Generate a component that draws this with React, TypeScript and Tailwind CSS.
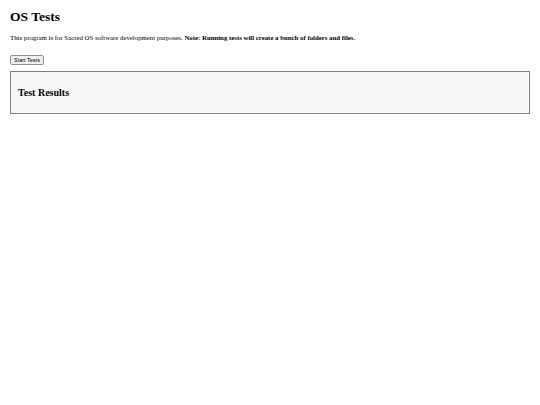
export default function App() {
  return (
    <div className="min-h-screen bg-white px-[10px] pt-[9px] font-['Liberation_Serif',serif] text-black">
      <h1 className="text-[13.5px] leading-[15px] font-bold">OS Tests</h1>

      <p className="mt-[10px] text-[6.8px] leading-[8px]">
        This program is for Sacred OS software development purposes.{" "}
        <strong className="font-bold">
          Note: Running tests will create a bunch of folders and files.
        </strong>
      </p>

      <button className="mt-[13px] block h-[10px] rounded-[2px] border border-[#8f8f8f] bg-[#efefef] px-[3px] font-['Liberation_Sans',sans-serif] text-[5.5px] leading-[8px] text-black">
        Start Tests
      </button>

      {/* results panel */}
      <div className="mt-[6px] h-[43px] border border-[#808080] bg-[#f8f8f8] pl-[7px] pt-[15px]">
        <h2 className="text-[10px] leading-[12px] font-bold">Test Results</h2>
      </div>
    </div>
  );
}
